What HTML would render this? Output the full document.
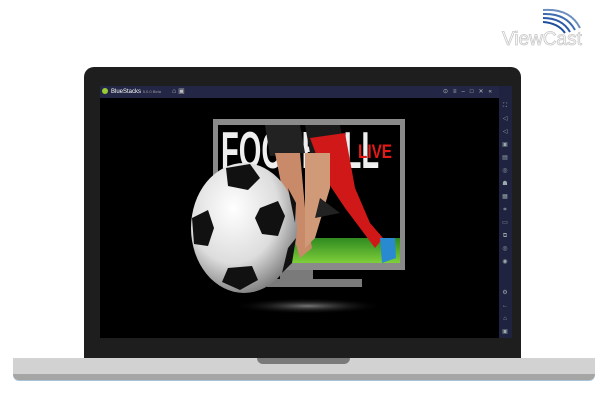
<!DOCTYPE html>
<html><head><style>
html,body{margin:0;padding:0;background:#fff;width:602px;height:414px;overflow:hidden;position:relative;font-family:"Liberation Sans",sans-serif}
.a{position:absolute}
</style></head><body>
<svg class="a" style="left:490px;top:0" width="112" height="60">
<path d="M53 10 Q80 8 90 28" stroke="#6d8fc0" stroke-width="2" fill="none"/>
<path d="M53 14 Q76 13 85 30" stroke="#3d6cb0" stroke-width="2" fill="none"/>
<path d="M53 18 Q72 18 80 32" stroke="#2a5aa8" stroke-width="2" fill="none"/>
<path d="M53 22 Q68 23 75 33" stroke="#1e4f9e" stroke-width="2" fill="none"/>
<text x="12" y="45" font-size="19" fill="#fff" stroke="#c8c8c8" stroke-width="0.8" font-family="Liberation Sans">ViewCast</text>
</svg>
<div class="a" style="left:13px;top:358px;width:582px;height:22px;background:#d2d2d2;border-radius:0 0 6px 6px;box-shadow:0 1px 0 #a9c3d6"></div>
<div class="a" style="left:13px;top:374px;width:582px;height:6px;background:#a5a5a5;border-radius:0 0 6px 6px"></div>
<div class="a" style="left:84px;top:67px;width:437px;height:291px;background:#1e1e1e;border-radius:10px 10px 0 0"></div>
<div class="a" style="left:257px;top:358px;width:93px;height:6px;background:#7a7a7a;border-radius:0 0 8px 8px"></div>
<div class="a" style="left:100px;top:86px;width:399px;height:252px;background:#000"></div>
<div class="a" style="left:100px;top:86px;width:412px;height:12px;background:#232745"></div>
<div class="a" style="left:499px;top:86px;width:13px;height:252px;background:#1f2340"></div>
<div class="a" style="left:102px;top:88px;width:6px;height:6px;background:#9c3;border-radius:50%"></div>
<div class="a" style="left:111px;top:87px;font-size:6px;color:#fff;line-height:10px">BlueStacks <span style="color:#999;font-size:4px">5.0.0 Beta</span></div>
<div class="a" style="left:172px;top:87px;font-size:7px;color:#bbb;line-height:10px">⌂ ▣</div>
<div class="a" style="left:443px;top:87px;font-size:6px;color:#bbb;line-height:10px;letter-spacing:5px">⊙≡–□✕«</div>
<div class="a" style="left:501px;top:100px;width:8px;font-size:6px;color:#9aa;line-height:13px;text-align:center">⛶<br>◁<br>◁<br>▣<br>▤<br>◎<br>☗<br>▦<br>⌗<br>▭<br>⧉<br>◎<br>◉</div>
<div class="a" style="left:501px;top:287px;width:8px;font-size:6px;color:#9aa;line-height:13px;text-align:center">⚙<br>←<br>⌂<br>▣</div>
<svg class="a" style="left:100px;top:98px" width="399" height="240">
<defs>
<radialGradient id="sh" cx="0.5" cy="0.5" r="0.5"><stop offset="0" stop-color="#777"/><stop offset="1" stop-color="#000" stop-opacity="0"/></radialGradient>
<radialGradient id="bl" cx="0.4" cy="0.35" r="0.7"><stop offset="0" stop-color="#fff"/><stop offset="0.6" stop-color="#ddd"/><stop offset="1" stop-color="#777"/></radialGradient>
<linearGradient id="gr" x1="0" y1="0" x2="0" y2="1"><stop offset="0" stop-color="#2f8a20"/><stop offset="1" stop-color="#7fcf3a"/></linearGradient>
</defs>
<ellipse cx="208" cy="208" rx="75" ry="8" fill="url(#sh)"/>
<rect x="113" y="21" width="192" height="151" fill="#8a8a8a"/>
<rect x="118" y="27" width="182" height="138" fill="#000"/>
<rect x="118" y="140" width="182" height="25" fill="url(#gr)"/>
<text x="0" y="0" font-size="40" font-weight="bold" fill="#eee" font-family="Liberation Sans" transform="translate(121,70) scale(0.62,1.3)" textLength="255" lengthAdjust="spacingAndGlyphs">FOOTBALL</text>
<path d="M165 27 L200 27 L205 55 L170 58 Z" fill="#222"/>
<path d="M205 27 L240 27 L245 55 L210 55 Z" fill="#1a1a1a"/>
<path d="M210 40 L245 35 L255 90 L270 125 L283 140 L275 150 L245 110 L225 80 Z" fill="#d01818"/>
<path d="M175 55 L200 55 L205 110 L212 150 L200 160 L188 120 Z" fill="#c98a6a"/>
<path d="M205 55 L230 55 L230 90 L215 140 L205 150 L205 110 Z" fill="#d09a78"/>
<path d="M220 100 L240 115 L215 120 Z" fill="#222"/>
<path d="M280 140 L295 140 L296 160 L282 165 Z" fill="#2a8ad0"/>
<text x="0" y="0" font-size="18" fill="#e31818" font-weight="bold" font-family="Liberation Sans" transform="translate(258,60) scale(0.85,1.1)">LIVE</text>
<text x="304" y="70" font-size="4" fill="#fff" transform="translate(-33,0)">HD</text>
<rect x="180" y="172" width="33" height="9" fill="#7a7a7a"/>
<rect x="167" y="181" width="95" height="8" fill="#7a7a7a"/>
<ellipse cx="144" cy="130" rx="53" ry="65" fill="url(#bl)"/>
<g fill="#111">
<path d="M126 70 L150 66 L160 80 L148 92 L128 88 Z"/>
<path d="M160 110 L178 103 L185 118 L178 138 L162 136 L155 120 Z"/>
<path d="M92 120 L108 112 L114 130 L108 148 L94 146 Z"/>
<path d="M128 170 L152 168 L158 182 L140 192 L122 184 Z"/>
<path d="M188 90 L196 105 L195 125 L190 100 Z"/>
<path d="M188 150 L196 140 L192 165 L182 175 Z"/>
</g>
</svg>
</body></html>
